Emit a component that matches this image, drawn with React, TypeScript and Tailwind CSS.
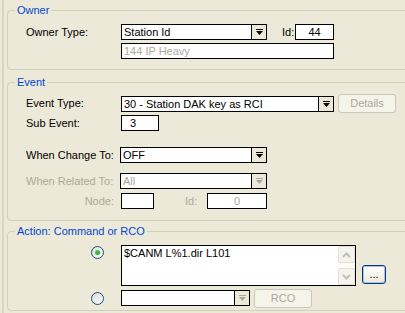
import type { ReactNode } from "react";

const FONT = { fontFamily: '"Liberation Sans", Arial, sans-serif' };

function Arrow({ disabled }: { disabled?: boolean }) {
  return (
    <svg width="7" height="6" viewBox="0 0 7 6" className="block">
      <rect x="0" y="0" width="7" height="1" fill={disabled ? "#aca899" : "#000"} />
      <path d="M0 2h7L3.5 6z" fill={disabled ? "#aca899" : "#000"} />
    </svg>
  );
}

function Combo({ value, width, disabled }: { value: string; width: string; disabled?: boolean }) {
  return (
    <div className={`flex h-[16px] border border-black bg-white ${width}`}>
      <div className={`flex-1 truncate pl-[2px] leading-[14px] ${disabled ? "text-[#aca899]" : "text-black"}`}>
        {value}
      </div>
      <div className="flex w-[15px] items-center justify-center border-l border-black bg-[#ece9d8]">
        <Arrow disabled={disabled} />
      </div>
    </div>
  );
}

function Box({ value, width, center, gray }: { value: string; width: string; center?: boolean; gray?: boolean }) {
  return (
    <div
      className={`h-[16px] border border-black bg-white px-[2px] leading-[14px] ${width} ${center ? "text-center" : ""} ${
        gray ? "text-[#aca899]" : "text-black"
      }`}
    >
      {value}
    </div>
  );
}

function DisabledButton({ label }: { label: string }) {
  return (
    <div className="flex h-[19px] w-[58px] items-center justify-center rounded-[3px] border border-[#c9c7ba] bg-[#f5f4ea] text-[#aca899]">
      {label}
    </div>
  );
}

function Radio({ checked }: { checked?: boolean }) {
  return (
    <div className="flex h-[13px] w-[13px] shrink-0 items-center justify-center rounded-full border border-[#1c5180] bg-gradient-to-br from-[#dcdbd5] to-white">
      {checked && <div className="h-[5px] w-[5px] rounded-full bg-gradient-to-br from-[#55d051] to-[#21a121]" />}
    </div>
  );
}

// XP style group box; legend sits on the top border
function Group({ title, className, children }: { title: string; className?: string; children: ReactNode }) {
  return (
    <fieldset className={`rounded-[4px] border border-[#d0d0bf] ${className ?? ""}`}>
      <legend className="ml-[-11px] px-[2px] leading-[13px] text-[#0046d5]">{title}</legend>
      {children}
    </fieldset>
  );
}

function Chevron({ up }: { up?: boolean }) {
  return (
    <svg width="9" height="6" viewBox="0 0 9 6" className="block">
      <path
        d={up ? "M1 5L4.5 1.5L8 5" : "M1 1L4.5 4.5L8 1"}
        fill="none"
        stroke="#c3c1b3"
        strokeWidth="2"
      />
    </svg>
  );
}

export default function App() {
  return (
    <div className="h-[313px] w-[405px] overflow-hidden bg-[#ece9d8] pl-[2px] text-[11px] text-black" style={FONT}>
      <div className="h-full w-[420px] border-l-2 border-[#d9d6c5] pl-[3px] pt-[4px]">
        {/* Owner */}
        <Group title="Owner" className="pb-[10px] pl-[18px] pt-[7px]">
          <div className="flex h-[16px] items-center">
            <div className="w-[95px]">Owner Type:</div>
            <Combo value="Station Id" width="w-[146px]" />
            <div className="ml-[15px] w-[13px]">Id:</div>
            <Box value="44" width="w-[39px]" center />
          </div>
          <div className="mt-[3px] flex">
            <div className="ml-[95px]">
              <Box value="144 IP Heavy" width="w-[213px]" gray />
            </div>
          </div>
        </Group>

        {/* Event */}
        <Group title="Event" className="mt-[6px] pb-[11px] pl-[18px] pt-[5px]">
          <div className="flex h-[19px] items-center">
            <div className="w-[95px]">Event Type:</div>
            <Combo value="30 - Station DAK key as RCI" width="w-[213px]" />
            <div className="ml-[4px]">
              <DisabledButton label="Details" />
            </div>
          </div>
          <div className="mt-[2px] flex h-[16px] items-center">
            <div className="w-[95px]">Sub Event:</div>
            <div className="h-[16px] w-[38px] border border-black bg-white pl-[8px] leading-[14px]">3</div>
          </div>
          <div className="mt-[16px] flex h-[16px] items-center">
            <div className="w-[94px]">When Change To:</div>
            <Combo value="OFF" width="w-[147px]" />
          </div>
          <div className="mt-[10px] flex h-[16px] items-center text-[#aca899]">
            <div className="w-[94px]">When Related To:</div>
            <Combo value="All" width="w-[147px]" disabled />
          </div>
          <div className="mt-[4px] flex h-[16px] items-center text-[#aca899]">
            <div className="w-[95px] pr-[7px] text-right">Node:</div>
            <Box value="" width="w-[33px]" />
            <div className="ml-[31px] w-[22px]">Id:</div>
            <Box value="0" width="w-[60px]" center gray />
          </div>
        </Group>

        {/* Action */}
        <Group title="Action: Command or RCO" className="mt-[4px] pb-[3px] pl-[18px] pt-[7px]">
          <div className="flex items-start">
            <div className="ml-[65px] mt-[1px]">
              <Radio checked />
            </div>
            <div className="ml-[17px] flex h-[41px] w-[235px] border border-black bg-white">
              <div className="flex-1 pl-[2px] pt-[1px] leading-[13px]">$CANM L%1.dir L101</div>
              <div className="flex w-[17px] flex-col bg-[#fbfbf8]">
                <div className="flex h-[17px] items-center justify-center rounded-[2px] border border-[#e3e1d6] bg-[#f4f3ee]">
                  <Chevron up />
                </div>
                <div className="flex-1" />
                <div className="flex h-[17px] items-center justify-center rounded-[2px] border border-[#e3e1d6] bg-[#f4f3ee]">
                  <Chevron />
                </div>
              </div>
            </div>
            <div className="mb-[2px] ml-[6px] flex h-[19px] w-[24px] items-center justify-center self-end rounded-[3px] border border-[#003c74] bg-gradient-to-b from-white to-[#ece9d8] shadow-[inset_0_0_0_1px_#a9c0ec] leading-none">
              ...
            </div>
          </div>
          <div className="mt-[3px] flex h-[18px] items-center">
            <div className="ml-[65px]">
              <Radio />
            </div>
            <div className="ml-[17px]">
              <Combo value="" width="w-[129px]" disabled />
            </div>
            <div className="ml-[4px]">
              <DisabledButton label="RCO" />
            </div>
          </div>
        </Group>
      </div>
    </div>
  );
}
